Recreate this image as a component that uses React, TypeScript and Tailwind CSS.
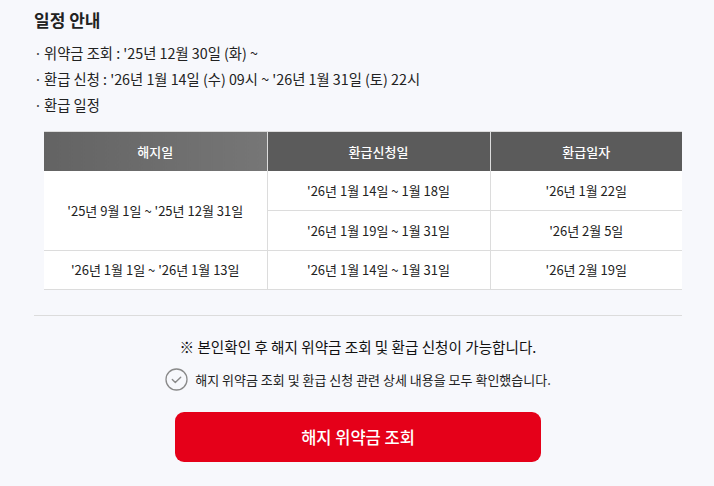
const font = { fontFamily: '"Noto Sans CJK KR", "Noto Sans", sans-serif' }

const schedule = [
  "위약금 조회 : '25년 12월 30일 (화) ~",
  "환급 신청 : '26년 1월 14일 (수) 09시 ~ '26년 1월 31일 (토) 22시",
  '환급 일정',
]

function CheckCircle() {
  return (
    <svg width="23" height="23" viewBox="0 0 23 23" fill="none">
      <circle cx="11.5" cy="11.5" r="10.5" stroke="#8a8a8a" strokeWidth="1.3" />
      <path d="M7.3 11.6l3 2.9 5.4-5.3" stroke="#8a8a8a" strokeWidth="1.4" strokeLinecap="round" strokeLinejoin="round" />
    </svg>
  )
}

export default function App() {
  return (
    <div className="w-[714px] h-[486px] bg-[#f7f8fc] text-[#222] overflow-hidden" style={font}>
      <div className="pl-[34px] pr-[32px] pt-[9px]">
        <h2 className="text-[17px] font-bold leading-[22px]">일정 안내</h2>

        <ul className="mt-[9px] flex flex-col">
          {schedule.map((s) => (
            <li key={s} className="flex items-center h-[26px] text-[14.3px]">
              <span className="w-[10px] text-[#444]">·</span>
              <span>{s}</span>
            </li>
          ))}
        </ul>

        <table className="ml-[10px] mt-[13px] w-[638px] border-collapse text-[13px] text-center bg-white">
          <colgroup>
            <col className="w-[223px]" />
            <col className="w-[223px]" />
            <col className="w-[192px]" />
          </colgroup>
          <thead>
            <tr className="h-[39px] border-t border-[#dcdcdc] text-white text-[13px]">
              <th className="font-medium bg-gradient-to-r from-[#636363] to-[#767676]">해지일</th>
              <th className="font-medium bg-[#5b5b5b] border-l border-[#dcdcdc]">환급신청일</th>
              <th className="font-medium bg-[#5b5b5b] border-l border-[#dcdcdc]">환급일자</th>
            </tr>
          </thead>
          <tbody>
            <tr className="h-[40px] border-b border-[#dcdcdc]">
              <td rowSpan={2} className="border-r border-[#dcdcdc]">'25년 9월 1일 ~ '25년 12월 31일</td>
              <td className="border-r border-[#dcdcdc]">'26년 1월 14일 ~ 1월 18일</td>
              <td>'26년 1월 22일</td>
            </tr>
            <tr className="h-[40px] border-b border-[#dcdcdc]">
              <td className="border-r border-[#dcdcdc]">'26년 1월 19일 ~ 1월 31일</td>
              <td>'26년 2월 5일</td>
            </tr>
            <tr className="h-[39px] border-b border-[#dcdcdc]">
              <td className="border-r border-[#dcdcdc]">'26년 1월 1일 ~ '26년 1월 13일</td>
              <td className="border-r border-[#dcdcdc]">'26년 1월 14일 ~ 1월 31일</td>
              <td>'26년 2월 19일</td>
            </tr>
          </tbody>
        </table>

        <div className="mt-[25px] h-px w-[648px] bg-[#dcdcdc]" />

        <div className="w-[648px] flex flex-col items-center">
          <p className="mt-[21px] text-[14.6px] leading-[20px] text-[#111]">
            ※ 본인확인 후 해지 위약금 조회 및 환급 신청이 가능합니다.
          </p>
          <label className="mt-[11px] flex items-center gap-[7px] text-[13px]">
            <CheckCircle />
            <span>해지 위약금 조회 및 환급 신청 관련 상세 내용을 모두 확인했습니다.</span>
          </label>
          <button className="mt-[21px] w-[366px] h-[50px] rounded-[9px] bg-[#e50019] text-white text-[16.5px] font-medium">
            해지 위약금 조회
          </button>
        </div>
      </div>
    </div>
  )
}
